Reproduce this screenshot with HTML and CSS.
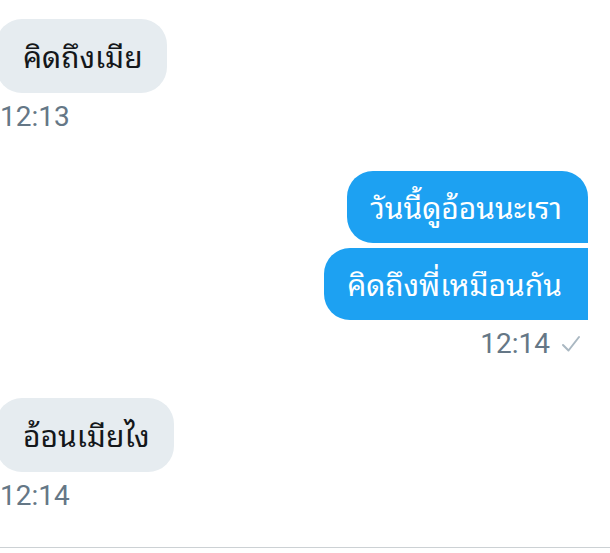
FILE: index.html
```html
<!DOCTYPE html>
<html lang="th">
<head>
<meta charset="utf-8">
<link rel="stylesheet" href="styles.css">
</head>
<body>
<div class="chat">
  <div class="msg in">
    <div class="bubble">คิดถึงเมีย</div>
    <div class="time">12:13</div>
  </div>
  <div class="msg out">
    <div class="bubble first">วันนี้ดูอ้อนนะเรา</div>
    <div class="bubble last">คิดถึงพี่เหมือนกัน</div>
    <div class="time">12:14<svg class="check" viewBox="0 0 20 18" width="20" height="18"><path d="M2 10 L7.5 15.5 L18 2" fill="none" stroke="#aab8c2" stroke-width="2" stroke-linecap="round" stroke-linejoin="round"/></svg></div>
  </div>
  <div class="msg in">
    <div class="bubble">อ้อนเมียไง</div>
    <div class="time">12:14</div>
  </div>
</div>
<div class="footer"></div>
</body>
</html>
```
FILE: styles.css
```css
html, body {
  margin: 0;
  padding: 0;
  background: #ffffff;
}
body {
  width: 610px;
  height: 553px;
  overflow: hidden;
  font-family: "Noto Sans Thai Looped", "Noto Sans Thai UI", "Noto Sans Thai", "Noto Sans", Roboto, sans-serif;
}
.chat {
  box-sizing: border-box;
  height: 548px;
  padding-top: 19px;
  border-bottom: 1px solid #ccd1d4;
  display: flex;
  flex-direction: column;
  gap: 38px;
}
.msg {
  display: flex;
  flex-direction: column;
}
.msg.in {
  align-items: flex-start;
}
.msg.out {
  align-items: flex-end;
  margin-right: 22px;
  gap: 5px;
}
.bubble {
  font-size: 30px;
  line-height: 34px;
  padding: 19px 24px 21px 27px;
  border-radius: 26px;
  white-space: nowrap;
}
.msg.in .bubble {
  background: #e6ecf0;
  color: #14171a;
  margin-left: -4px;
}
.msg.out .bubble {
  background: #1da1f2;
  color: #ffffff;
  padding: 18px 26px 20px 23px;
}
.msg.out .bubble.first {
  border-bottom-right-radius: 0;
}
.msg.out .bubble.last {
  border-top-right-radius: 0;
  border-bottom-right-radius: 0;
}
.time {
  font-family: Roboto, "Liberation Sans", sans-serif;
  font-size: 28px;
  line-height: 32px;
  color: #657786;
  margin-top: 8px;
  display: flex;
  align-items: center;
}
.msg.out .time {
  margin-top: 3px;
  margin-right: 7px;
}
.check {
  margin-left: 11px;
}
.footer {
  height: 5px;
}
```
